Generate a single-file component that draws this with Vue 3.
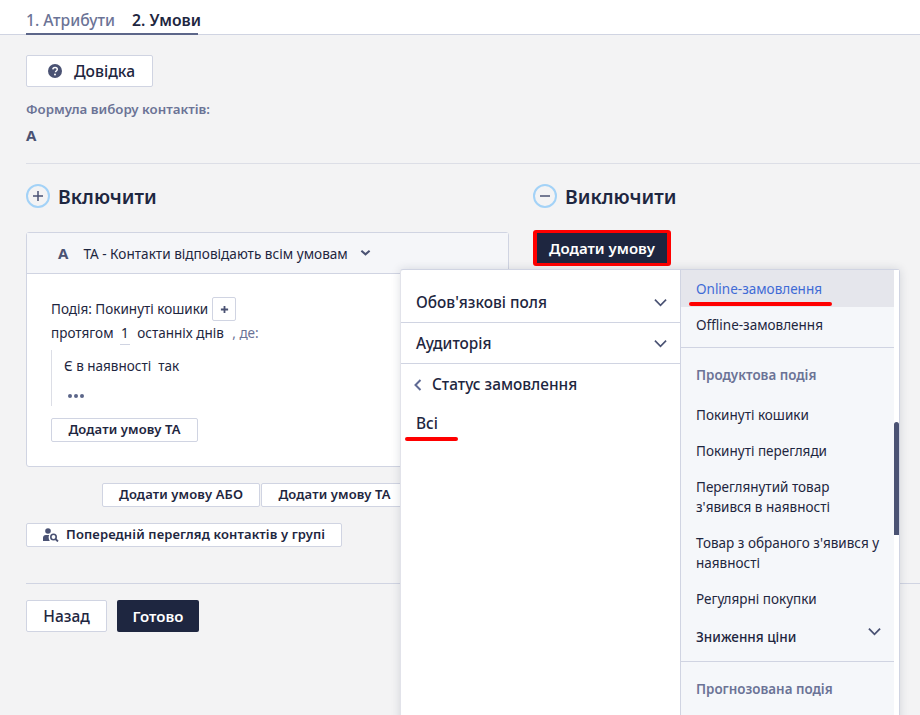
<template>
  <div class="page">
    <div class="tabs">
      <div class="tab">1. Атрибути</div>
      <div class="tab active">2. Умови</div>
    </div>

    <div class="content">
      <button class="btn help-btn">
        <svg class="help-icon" viewBox="0 0 16 16" width="14" height="14">
          <circle cx="8" cy="8" r="8" fill="#4a5273" />
          <path d="M5.5 6.2C5.6 4.8 6.7 4 8.1 4c1.4 0 2.5.8 2.5 2.1 0 1.9-2 1.8-2 3.2" fill="none" stroke="#fff" stroke-width="1.7" />
          <circle cx="8" cy="12" r="1.1" fill="#fff" />
        </svg>
        Довідка
      </button>

      <div class="formula-label">Формула вибору контактів:</div>
      <div class="formula-value">A</div>
    </div>

    <div class="divider"></div>

    <div class="columns">
      <div class="col-include">
        <div class="col-title">
          <span class="round-icon">
            <svg viewBox="0 0 12 12" width="12" height="12"><path d="M1 6h10M6 1v10" stroke="#4a5273" stroke-width="1.5" /></svg>
          </span>
          Включити
        </div>

        <div class="card">
          <div class="card-head">
            <span class="card-letter">A</span>
            <span class="card-name">ТА - Контакти відповідають всім умовам</span>
            <svg class="head-chevron" viewBox="0 0 12 8" width="11" height="8"><path d="M1.5 1.5 6 5.5l4.5-4" fill="none" stroke="#4a5273" stroke-width="2.2" /></svg>
          </div>
          <div class="card-body">
            <div class="event-row">
              Подія: Покинуті кошики
              <span class="plus-btn">
                <svg viewBox="0 0 10 10" width="9" height="9"><path d="M1 5h8M5 1v8" stroke="#4a5273" stroke-width="2" /></svg>
              </span>
            </div>
            <div class="period-row">
              протягом <span class="days">1</span> останніх днів <span class="where">, де:</span>
            </div>
            <div class="conditions">
              <div class="condition">Є в наявності&nbsp; так</div>
              <div class="dots"><i></i><i></i><i></i></div>
            </div>
            <button class="btn small-btn add-and">Додати умову ТА</button>
          </div>
        </div>

        <div class="add-row">
          <button class="btn small-btn add-or">Додати умову АБО</button>
          <button class="btn small-btn add-and">Додати умову ТА</button>
        </div>

        <button class="btn small-btn preview-btn">
          <svg viewBox="0 0 16 14" width="16" height="14">
            <circle cx="5" cy="3" r="2.8" fill="#4a5273" />
            <path d="M0 13V9.8C0 8.2 1.2 7 2.8 7h3.4c-.9 1.6-.7 4 .6 6z" fill="#4a5273" />
            <circle cx="10.5" cy="9" r="2.7" fill="none" stroke="#4a5273" stroke-width="1.6" />
            <path d="M12.5 11l2.5 2.5" stroke="#4a5273" stroke-width="1.8" />
          </svg>
          Попередній перегляд контактів у групі
        </button>
      </div>

      <div class="col-exclude">
        <div class="col-title">
          <span class="round-icon">
            <svg viewBox="0 0 12 12" width="12" height="12"><path d="M1 6h10" stroke="#4a5273" stroke-width="1.5" /></svg>
          </span>
          Виключити
        </div>
        <button class="add-condition">Додати умову</button>
      </div>
    </div>

    <div class="divider footer-divider"></div>

    <div class="footer">
      <button class="btn back-btn">Назад</button>
      <button class="done-btn">Готово</button>
    </div>

    <!-- dropdown menu over the page -->
    <div class="menu">
      <div class="menu-left">
        <div class="group" v-for="g in leftGroups" :key="g">
          <span>{{ g }}</span>
          <svg viewBox="0 0 14 9" width="13" height="9"><path d="M1 1.5l6 6 6-6" fill="none" stroke="#4a5273" stroke-width="1.8" /></svg>
        </div>
        <div class="status-head">
          <svg viewBox="0 0 8 12" width="8" height="12"><path d="M6.5 1 1.5 6l5 5" fill="none" stroke="#5f6a94" stroke-width="2" /></svg>
          Статус замовлення
        </div>
        <div class="all-item">Всі<span class="red-line all-line"></span></div>
      </div>

      <div class="menu-right">
        <div class="menu-list">
          <div class="item selected">Online-замовлення<span class="red-line online-line"></span></div>
          <div class="item">Offline-замовлення</div>
          <div class="sep"></div>
          <div class="section">Продуктова подія</div>
          <div class="item" v-for="e in productEvents" :key="e">{{ e }}</div>
          <div class="item price">
            Зниження ціни
            <svg viewBox="0 0 14 9" width="13" height="9"><path d="M1 1.5l6 6 6-6" fill="none" stroke="#4a5273" stroke-width="2" /></svg>
          </div>
          <div class="sep"></div>
          <div class="section">Прогнозована подія</div>
        </div>
        <div class="scroll"><div class="thumb"></div></div>
      </div>
    </div>
  </div>
</template>

<script setup>
const leftGroups = ['Обов\'язкові поля', 'Аудиторія']

const productEvents = [
  'Покинуті кошики',
  'Покинуті перегляди',
  'Переглянутий товар\nз\'явився в наявності',
  'Товар з обраного з\'явився у\nнаявності',
  'Регулярні покупки'
]
</script>

<style>
html,
body {
  margin: 0;
  background: #f3f3f4;
}
</style>

<style scoped>
.page {
  position: relative;
  width: 920px;
  height: 715px;
  overflow: hidden;
  background: #f3f3f4;
  color: #1e2640;
  font-family: "Noto Sans", "Liberation Sans", sans-serif;
  font-size: 14px;
}

.tabs {
  display: flex;
  height: 34px;
  padding-left: 26px;
  background: #fff;
  border-bottom: 1px solid #d0d4e2;
}

.tab {
  box-sizing: border-box;
  width: 106px;
  height: 35px;
  padding-top: 10px;
  border-bottom: 2px solid #5c6689;
  color: #6b7396;
  font-size: 15.7px;
  font-weight: 500;
  line-height: 20px;
  white-space: nowrap;
}

.tab.active {
  width: 66px;
  color: #1e2640;
  font-weight: 600;
}

.content {
  padding: 20px 26px 0;
}

.btn {
  box-sizing: border-box;
  background: #fff;
  border: 1px solid #d0d4e2;
  border-radius: 2px;
  color: #1e2640;
  font-family: inherit;
  font-weight: 500;
}

.help-btn {
  display: flex;
  align-items: center;
  gap: 12px;
  width: 127px;
  height: 32px;
  padding: 0 0 0 21px;
  font-size: 15.6px;
}

.help-icon {
  flex: none;
}

.formula-label {
  margin-top: 13px;
  color: #6b7396;
  font-size: 13.3px;
  font-weight: 600;
  line-height: 18px;
}

.formula-value {
  margin-top: 8px;
  color: #4a5273;
  font-size: 15px;
  font-weight: 700;
  line-height: 18px;
}

.divider {
  height: 1px;
  margin: 19px 0 0 26px;
  background: #dcdee6;
}

.columns {
  display: flex;
  padding: 20px 0 0 26px;
}

.col-include {
  width: 483px;
}

.col-exclude {
  margin-left: 24px;
}

.col-title {
  display: flex;
  align-items: center;
  gap: 8px;
  height: 24px;
  color: #1e2640;
  font-size: 19.4px;
  font-weight: 600;
}

.round-icon {
  display: flex;
  align-items: center;
  justify-content: center;
  box-sizing: border-box;
  width: 24px;
  height: 24px;
  border: 2px solid #a3d2f7;
  border-radius: 50%;
}

.card {
  box-sizing: border-box;
  height: 235px;
  margin-top: 24px;
  background: #fff;
  border: 1px solid #d0d4e2;
  border-radius: 3px;
}

.card-head {
  display: flex;
  align-items: center;
  box-sizing: border-box;
  height: 41px;
  padding-left: 31px;
  background: #f5f6f9;
  border-bottom: 1px solid #d0d4e2;
}

.card-letter {
  color: #4a5273;
  font-size: 15px;
  font-weight: 700;
}

.card-name {
  margin-left: 15px;
  font-size: 13.6px;
}

.head-chevron {
  margin-left: 12px;
}

.card-body {
  padding: 23px 24px 0;
  font-size: 13.5px;
}

.event-row {
  display: flex;
  align-items: center;
  gap: 4px;
  height: 24px;
}

.plus-btn {
  display: flex;
  align-items: center;
  justify-content: center;
  box-sizing: border-box;
  width: 24px;
  height: 24px;
  border: 1px solid #d0d4e2;
  border-radius: 2px;
}

.period-row {
  height: 24px;
  line-height: 24px;
  white-space: nowrap;
}

.days {
  display: inline-block;
  margin: 0 4px 0 3px;
  padding: 0 1px;
  border-bottom: 1px solid #d0d4e2;
  line-height: 22px;
}

.where {
  margin-left: 5px;
  color: #6b7396;
}

.conditions {
  height: 56px;
  margin-top: 5px;
  padding-left: 12px;
  border-left: 1px solid #dcdee6;
}

.condition {
  padding-top: 4px;
  line-height: 24px;
}

.dots {
  display: flex;
  gap: 2px;
  margin: 16px 0 0 4px;
}

.dots i {
  width: 4px;
  height: 4px;
  background: #5c6689;
  border-radius: 50%;
}

.small-btn {
  height: 24px;
  padding: 0 0 2px;
  font-size: 13px;
  font-weight: 600;
  letter-spacing: 0.13px;
}

.card-body .add-and {
  margin-top: 12px;
}

.add-and {
  flex: none;
  width: 147px;
}

.add-row {
  display: flex;
  gap: 1px;
  margin: 16px 0 0 76px;
}

.add-or {
  width: 158px;
}

.preview-btn {
  display: flex;
  align-items: center;
  gap: 7px;
  width: 316px;
  margin-top: 16px;
  padding-left: 16px;
  white-space: nowrap;
}

.preview-btn svg {
  flex: none;
  margin-top: 2px;
}

.add-condition {
  display: block;
  width: 138px;
  height: 36px;
  margin-top: 22px;
  padding: 0;
  background: #1e2640;
  border-style: solid;
  border-color: #f00;
  border-width: 3px 4px;
  border-radius: 3px;
  color: #fff;
  font-family: inherit;
  font-size: 15px;
  font-weight: 600;
}

.footer-divider {
  margin-top: 36px;
  background: #d0d4e2;
}

.footer {
  display: flex;
  gap: 10px;
  padding: 16px 0 0 26px;
}

.back-btn {
  width: 81px;
  height: 32px;
  padding: 0;
  font-size: 15.5px;
}

.done-btn {
  width: 82px;
  height: 32px;
  padding: 0;
  background: #1e2640;
  border: 0;
  border-radius: 2px;
  color: #fff;
  font-family: inherit;
  font-size: 15px;
  font-weight: 600;
}

.menu {
  position: absolute;
  top: 269px;
  left: 400px;
  display: flex;
  box-sizing: border-box;
  width: 500px;
  height: 460px;
  background: #fff;
  border: 1px solid #d0d4e2;
  border-left-color: #e2e3ea;
  border-radius: 3px;
  box-shadow: 0 0 10px rgba(30, 38, 64, 0.15);
}

.menu-left {
  box-sizing: border-box;
  width: 280px;
  border-right: 1px solid #d0d4e2;
}

.group {
  display: flex;
  align-items: center;
  justify-content: space-between;
  box-sizing: border-box;
  height: 41px;
  padding: 0 13px 0 15px;
  border-bottom: 1px solid #d0d4e2;
  font-size: 15.4px;
  font-weight: 500;
}

.group:first-child {
  height: 53px;
  padding-top: 12px;
}

.status-head {
  display: flex;
  align-items: center;
  gap: 10px;
  height: 41px;
  padding-left: 13px;
  font-size: 15.4px;
  font-weight: 500;
}

.all-item {
  position: relative;
  height: 40px;
  padding: 9px 0 0 15px;
  font-size: 15.4px;
  font-weight: 500;
  line-height: 20px;
}

.red-line {
  position: absolute;
  height: 4px;
  background: #f00;
  border-radius: 2px;
}

.all-line {
  top: 32px;
  left: 4px;
  width: 53px;
}

.menu-right {
  display: flex;
  flex: 1;
  min-width: 0;
}

.menu-list {
  flex: 1;
  min-width: 0;
  background: #f5f7fa;
}

.item {
  position: relative;
  padding: 8px 0 8px 15px;
  font-size: 13.5px;
  line-height: 20px;
  white-space: pre-line;
}

.item.selected {
  box-sizing: border-box;
  height: 37px;
  padding-top: 9px;
  background: #e5e6ec;
  color: #3f6bd6;
}

.online-line {
  top: 32px;
  left: 8px;
  width: 143px;
}

.sep {
  height: 1px;
  margin-top: 4px;
  background: #d0d4e2;
}

.section {
  padding: 17px 15px 12px;
  color: #6b7396;
  font-size: 13.4px;
  font-weight: 600;
  line-height: 20px;
}

.price {
  display: flex;
  justify-content: space-between;
  padding: 10px 13px 10px 15px;
  font-weight: 500;
}

.scroll {
  width: 5px;
  background: #fff;
}

.thumb {
  width: 5px;
  height: 113px;
  margin-top: 152px;
  background: #4a5273;
  border-radius: 3px 3px 0 0;
}
</style>
